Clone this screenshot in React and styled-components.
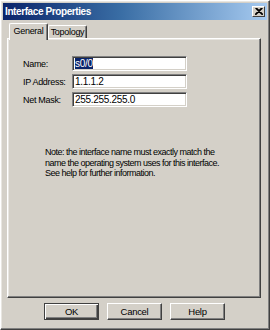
import React from "react";
import styled, { createGlobalStyle } from "styled-components";

const Global = createGlobalStyle`
  html, body {
    margin: 0;
    padding: 0;
    background: #d4d0c8;
  }
  * {
    box-sizing: border-box;
  }
`;

const Window = styled.div`
  width: 270px;
  height: 330px;
  display: flex;
  flex-direction: column;
  background: #d4d0c8;
  border: 1px solid;
  border-color: #ffffff #404040 #404040 #ffffff;
  box-shadow: inset -1px -1px #808080, inset 1px 1px #e8e6e1;
  padding: 2px;
  font-family: "Liberation Sans", Arial, sans-serif;
  font-size: 9px;
  letter-spacing: -0.3px;
  color: #000;
  white-space: nowrap;
`;

const TitleBar = styled.div`
  height: 17px;
  flex: none;
  display: flex;
  align-items: center;
  justify-content: space-between;
  padding: 0 2px 0 2px;
  background: linear-gradient(to right, #0a246a, #3a6ea5 45%, #a6caf0);
`;

const Title = styled.span`
  color: #fff;
  font-weight: bold;
  font-size: 10px;
  letter-spacing: -0.4px;
`;

const CloseBox = styled.div`
  width: 13px;
  height: 11px;
  display: flex;
  align-items: center;
  justify-content: center;
  background: #d4d0c8;
  border: 1px solid;
  border-color: #fff #404040 #404040 #fff;
`;

const Body = styled.div`
  flex: 1;
  display: flex;
  flex-direction: column;
  padding: 3px 6px 7px 4px;
`;

const TabStrip = styled.div`
  height: 15px;
  flex: none;
  display: flex;
  align-items: flex-end;
  padding-left: 2px;
  position: relative;
  z-index: 1;
`;

const Tab = styled.div`
  width: 39px;
  height: ${(p) => (p.$active ? "17px" : "13px")};
  margin-bottom: ${(p) => (p.$active ? "-2px" : "0")};
  display: flex;
  align-items: ${(p) => (p.$active ? "flex-start" : "center")};
  padding-top: ${(p) => (p.$active ? "2px" : "0")};
  justify-content: center;
  background: #d4d0c8;
  border-top: 1px solid #fff;
  border-left: 1px solid #fff;
  border-right: 1px solid #404040;
  box-shadow: inset -1px 0 #808080;
  border-radius: 2px 2px 0 0;
`;

const Panel = styled.div`
  flex: 1;
  display: flex;
  flex-direction: column;
  border: 1px solid;
  border-color: #fff #404040 #404040 #fff;
  box-shadow: inset -1px -1px #808080, inset 1px 1px #e8e6e1;
  padding: 17px 14px 0 15px;
`;

const Fields = styled.div`
  display: flex;
  flex-direction: column;
  gap: 3px;
`;

const Row = styled.div`
  display: flex;
  align-items: center;
  height: 15px;
`;

const Label = styled.span`
  width: 49px;
`;

const Input = styled.div`
  width: 115px;
  height: 15px;
  background: #fff;
  border: 1px solid;
  border-color: #808080 #fff #fff #808080;
  box-shadow: inset 1px 1px #404040, inset -1px -1px #d4d0c8;
  padding: 1px 0 0 2px;
  font-size: 10px;
  line-height: 12px;
`;

const Selected = styled.span`
  background: #0a246a;
  color: #fff;
`;

const Note = styled.p`
  margin: 40px 0 0 22px;
  line-height: 10.5px;
  letter-spacing: -0.5px;
`;

const Buttons = styled.div`
  flex: none;
  display: flex;
  justify-content: center;
  gap: 8px;
  margin-top: 5px;
  padding-left: 1px;
`;

const Button = styled.div`
  width: 55px;
  height: 17px;
  display: flex;
  align-items: center;
  justify-content: center;
  background: #d4d0c8;
  border: 1px solid;
  border-color: ${(p) =>
    p.$default ? "#404040" : "#fff #404040 #404040 #fff"};
  box-shadow: ${(p) =>
    p.$default
      ? "inset 1px 1px #fff, inset -1px -1px #404040, inset -2px -2px #808080"
      : "inset -1px -1px #808080"};
  font-size: 9.5px;
`;

export default function App() {
  return (
    <>
      <Global />
      <Window>
        <TitleBar>
          <Title>Interface Properties</Title>
          <CloseBox>
            <svg width="8" height="7" viewBox="0 0 8 7">
              <path d="M0.5 0 L7.5 7 M7.5 0 L0.5 7 M1.5 0 L8 6.5 M6.5 0 L0 6.5" stroke="#000" strokeWidth="1.1" />
            </svg>
          </CloseBox>
        </TitleBar>
        <Body>
          <TabStrip>
            <Tab $active>General</Tab>
            <Tab>Topology</Tab>
          </TabStrip>
          <Panel>
            <Fields>
              <Row>
                <Label>Name:</Label>
                <Input>
                  <Selected>s0/0</Selected>
                </Input>
              </Row>
              <Row>
                <Label>IP Address:</Label>
                <Input>1.1.1.2</Input>
              </Row>
              <Row>
                <Label>Net Mask:</Label>
                <Input>255.255.255.0</Input>
              </Row>
            </Fields>
            <Note>
              Note: the interface name must exactly match the
              <br />
              name the operating system uses for this interface.
              <br />
              See help for further information.
            </Note>
          </Panel>
          <Buttons>
            <Button $default>OK</Button>
            <Button>Cancel</Button>
            <Button>Help</Button>
          </Buttons>
        </Body>
      </Window>
    </>
  );
}
